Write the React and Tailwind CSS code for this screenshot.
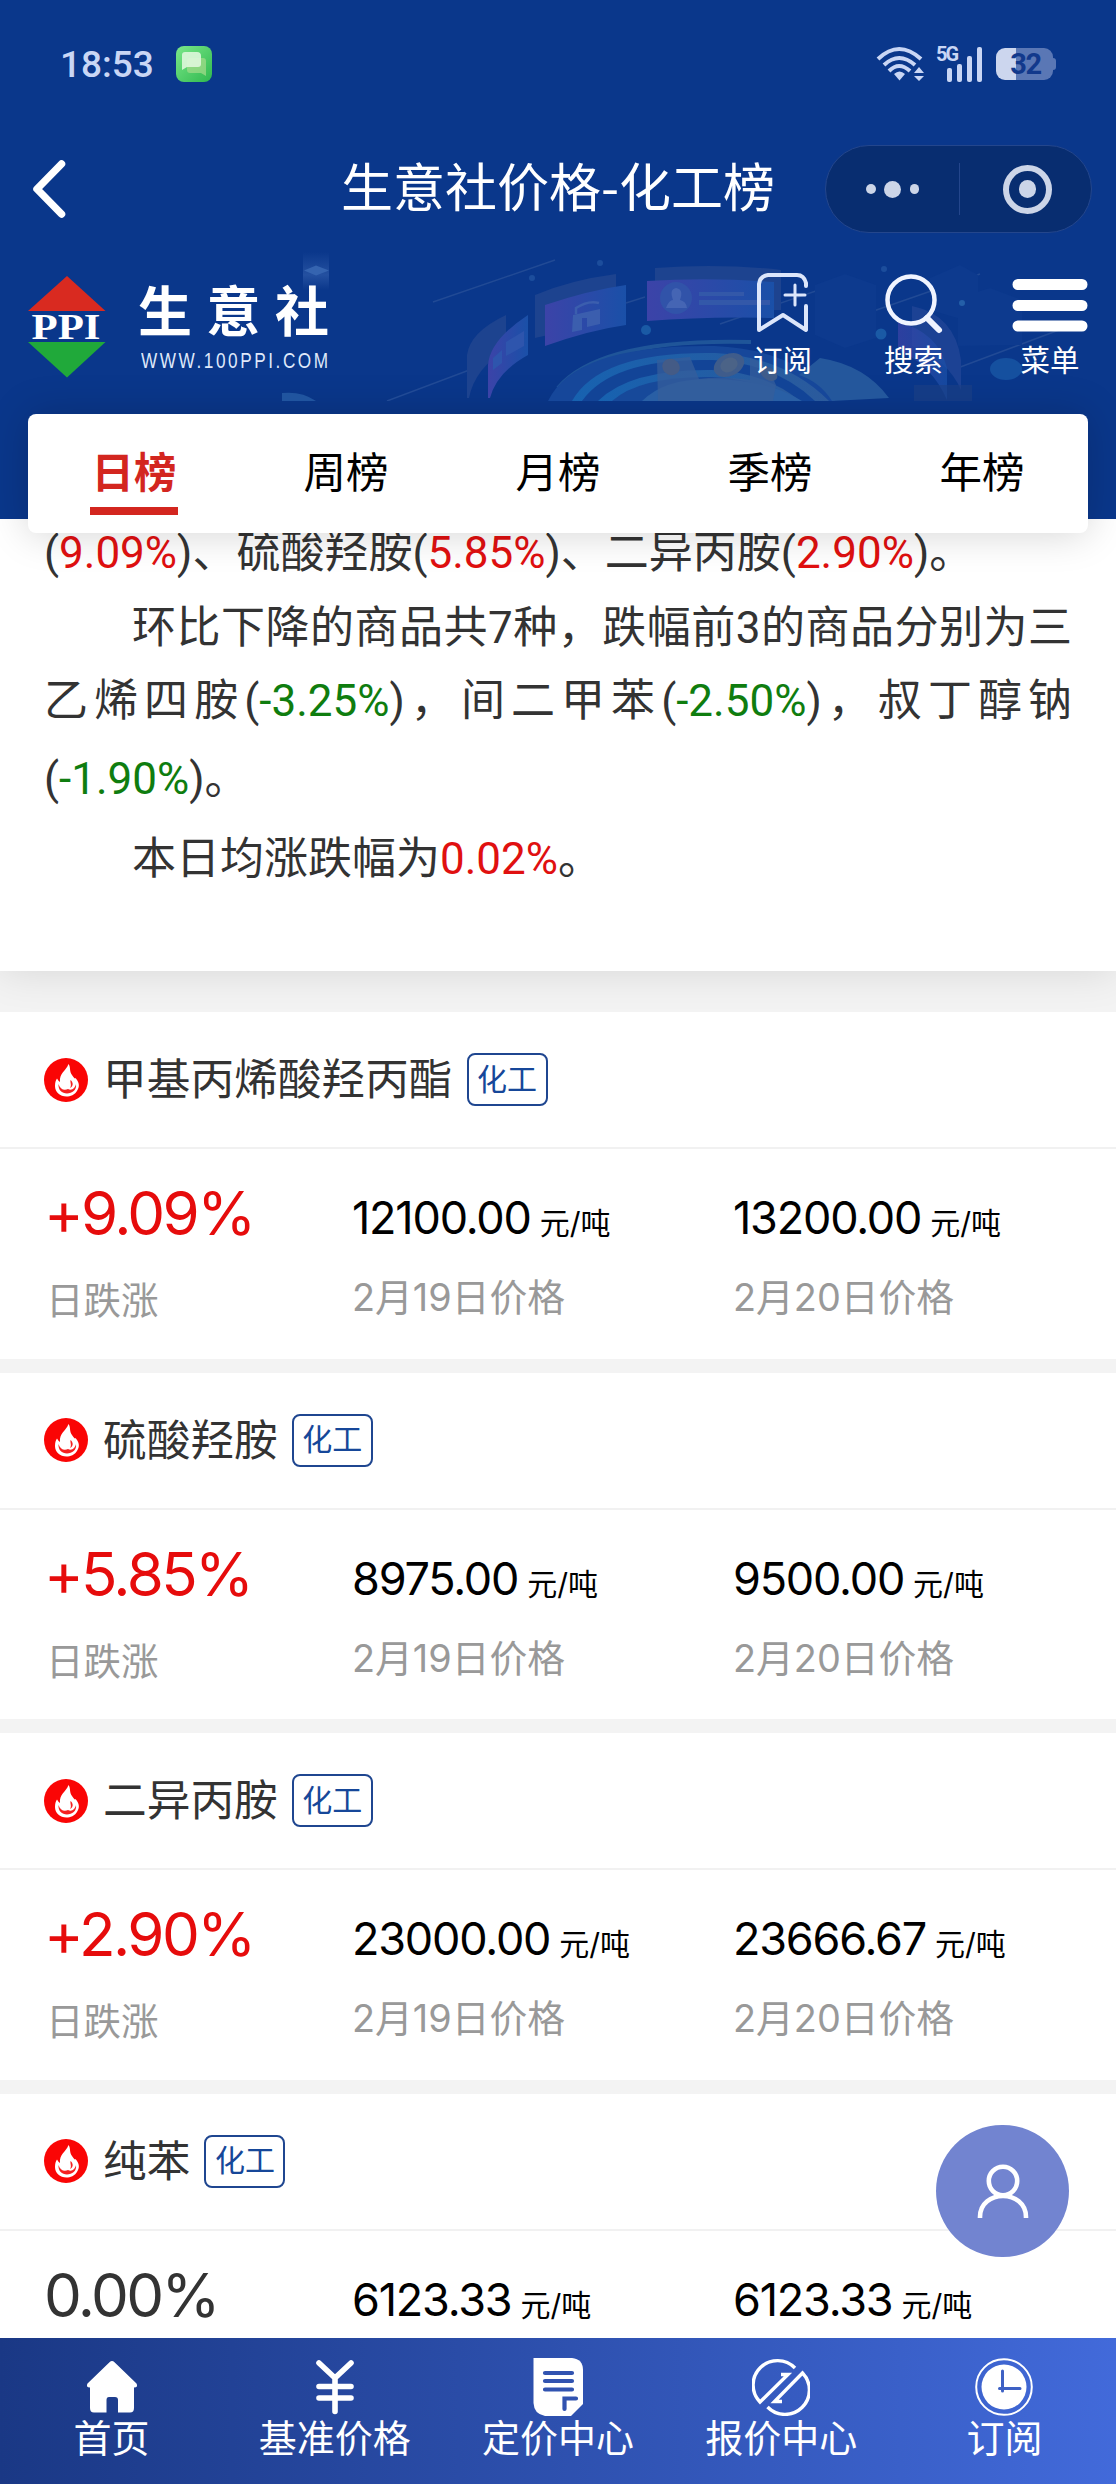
import { useState } from 'react';

const tabs = ['日榜', '周榜', '月榜', '季榜', '年榜'];

const goods = [
  { name: '甲基丙烯酸羟丙酯', rate: '+9.09%', prev: '12100.00', next: '13200.00', up: true, labels: true },
  { name: '硫酸羟胺', rate: '+5.85%', prev: '8975.00', next: '9500.00', up: true, labels: true },
  { name: '二异丙胺', rate: '+2.90%', prev: '23000.00', next: '23666.67', up: true, labels: true },
  { name: '纯苯', rate: '0.00%', prev: '6123.33', next: '6123.33', up: false, labels: false },
];

const HomeIcon = () => (
  <svg width="58" height="58" viewBox="0 0 58 58" fill="#fff">
    <path d="M26.5 4.2 Q29 2 31.5 4.2 L53.5 25.5 Q55.5 29.5 51 29.5 V50 Q51 54.5 47 54.5 H35 V42 Q35 39 32 39 H26 Q23.500 39 23.500 42 V54.500 H11 Q7 54.500 7 50 V29.500 Q2.500 29.500 4.500 25.500 Z" />
  </svg>
);

const YenIcon = () => (
  <svg width="58" height="58" viewBox="0 0 58 58" fill="none" stroke="#fff" strokeWidth="5.6" strokeLinecap="round">
    <path d="M13 5 L29 20 L45 5 M29 20 V53.500 M13 28.500 H45 M13 40 H45" />
  </svg>
);

const DocIcon = () => (
  <svg width="58" height="58" viewBox="0 0 58 58">
    <path d="M4.500 0 H43 Q54 1 54 12 V46 L42 58 H16 Q5 56 4.500 45 Z" fill="#fff" />
    <path d="M16 15 H43 M16 23 H43 M16 31.500 H43 M47 40.500 H35.500 V51" fill="none" stroke="#3153b0" strokeWidth="4.200" strokeLinecap="round" />
  </svg>
);

const QuoteIcon = () => (
  <svg width="58" height="58" viewBox="0 0 58 58" fill="none" stroke="#fff" strokeWidth="3.4">
    <path d="M43 10 A24 24 0 0 0 8 44 L36 16.500 H29" />
    <path d="M15.500 49 A24 24 0 0 0 50.500 15 L22.500 43.500 H30" />
  </svg>
);

const ClockIcon = () => (
  <svg width="58" height="58" viewBox="0 0 58 58">
    <circle cx="29" cy="29" r="27.800" fill="none" stroke="#fff" strokeWidth="2" />
    <circle cx="29" cy="29" r="22.500" fill="#fff" />
    <path d="M27.500 13 V33 M24.500 30.500 H45" fill="none" stroke="#3e61c4" strokeWidth="3" strokeLinecap="round" />
  </svg>
);

const bottomNav = [
  { label: '首页', icon: <HomeIcon /> },
  { label: '基准价格', icon: <YenIcon /> },
  { label: '定价中心', icon: <DocIcon /> },
  { label: '报价中心', icon: <QuoteIcon /> },
  { label: '订阅', icon: <ClockIcon /> },
];

const StatusBar = () => (
  <div className="flex h-[128px] items-center justify-between pl-[60px] pr-[60px] text-[#c9d6f5]">
    <div className="flex items-center">
      <span className="w-[116px] font-['Roboto'] text-[37px] font-medium leading-none">18:53</span>
      <svg width="36" height="36" viewBox="0 0 36 36">
        <defs>
          <linearGradient id="msg" x1="0" y1="0" x2="1" y2="1">
            <stop offset="0" stopColor="#7be88a" />
            <stop offset="1" stopColor="#2fb84e" />
          </linearGradient>
        </defs>
        <rect width="36" height="36" rx="8" fill="url(#msg)" />
        <path d="M14 12 H27 Q30 12 30 15 V30 L25 27 H14 Q11 27 11 24 V15 Q11 12 14 12Z" fill="#a6dc8c" opacity=".7" />
        <path d="M9 6 H21 Q25 6 25 10 V18 Q25 21 22 21 H11 L6 24 V9 Q6 6 9 6Z" fill="#dff7dc" opacity=".9" />
      </svg>
    </div>
    <div className="flex items-center">
      <svg width="48" height="36" viewBox="0 0 48 36" fill="none" stroke="#c9d6f5" strokeWidth="4">
        <path d="M2 13 Q23 -7 45 13" />
        <path d="M8 19 Q23 5 39 19" />
        <path d="M13 25 Q23 15 34 25" />
        <path d="M18 28 Q23.500 23 29 28 L23.500 34.500Z" fill="#c9d6f5" stroke="none" />
        <path d="M43 21 L48 27 H38Z M43 35 L38 30 H48Z" fill="#c9d6f5" stroke="none" />
      </svg>
      <div className="relative ml-3 h-[36px] w-[46px]">
        <span className="absolute left-0 top-[-1px] font-['Roboto'] text-[20px] font-bold leading-[18px] tracking-[-2px]">5G</span>
        <div className="flex h-full items-end justify-end gap-[4.500px]">
          <i className="h-[14px] w-[5.500px] rounded-[2px] bg-[#c9d6f5]" />
          <i className="h-[18px] w-[5.500px] rounded-[2px] bg-[#c9d6f5]" />
          <i className="h-[26px] w-[5.500px] rounded-[2px] bg-[#c9d6f5]" />
          <i className="h-[35px] w-[5.500px] rounded-[2px] bg-[#c9d6f5]" />
        </div>
      </div>
      <div className="ml-[14px] flex items-center">
        <div className="flex h-[32px] w-[57px] items-center justify-center rounded-[9px] bg-[linear-gradient(90deg,#ccd6ee_35%,#5a77b5_35%)] pl-[2px] font-['Roboto'] text-[29px] font-bold leading-none tracking-[-1.500px] text-[#12398c]">
          32
        </div>
        <div className="h-[12px] w-[3px] rounded-r bg-[#5a77b5]" />
      </div>
    </div>
  </div>
);

const TitleBar = () => (
  <div className="relative flex h-[122px] items-center justify-center">
    <svg className="absolute left-[30px] top-[30px]" width="40" height="62" viewBox="0 0 40 62" fill="none" stroke="#fff" strokeWidth="7.500" strokeLinecap="round" strokeLinejoin="round">
      <path d="M31.500 6 L7 31 L31.500 56" />
    </svg>
    <h1 className="mb-[8px] text-[52px] leading-[60px] text-white">生意社价格-化工榜</h1>
    <div className="absolute left-[825px] top-[17px] flex h-[88px] w-[267px] items-center rounded-full border border-[#24468c] bg-[#082d70]">
      <div className="flex w-[133px] items-center justify-center gap-[8.500px]">
        <i className="h-[9.500px] w-[9.500px] rounded-full bg-[#ccd5e8]" />
        <i className="h-[17px] w-[17px] rounded-full bg-[#ccd5e8]" />
        <i className="h-[9.500px] w-[9.500px] rounded-full bg-[#ccd5e8]" />
      </div>
      <div className="h-[52px] w-px bg-[#24468c]" />
      <div className="ml-[43px] flex h-[49px] w-[49px] items-center justify-center rounded-full border-[6px] border-[#ccd5e8]">
        <i className="h-[17.500px] w-[17.500px] rounded-full bg-[#ccd5e8]" />
      </div>
    </div>
  </div>
);

// faint isometric city behind the logo row
const BannerArt = () => (
  <svg className="absolute inset-0" width="1116" height="151" viewBox="0 0 1116 151" fill="none">
    <defs>
      <linearGradient id="panel" x1="0" y1="0" x2="1" y2="0">
        <stop offset="0" stopColor="#3c43a8" />
        <stop offset="1" stopColor="#1a50a8" />
      </linearGradient>
      <linearGradient id="ring" x1="0" y1="0" x2="1" y2="0">
        <stop offset="0" stopColor="#1762b0" />
        <stop offset="1" stopColor="#2b5a9c" />
      </linearGradient>
      <linearGradient id="beam" x1="0" y1="0" x2="0" y2="1">
        <stop offset="0" stopColor="#2a56a5" stopOpacity="0" />
        <stop offset=".6" stopColor="#2a56a5" stopOpacity=".8" />
        <stop offset="1" stopColor="#2a56a5" stopOpacity="0" />
      </linearGradient>
    </defs>
    <rect x="303" y="2" width="26" height="38" fill="url(#beam)" />
    <path d="M304 20.500 L316 15.500 L329 20.500 L316 25.500Z" fill="#3564b0" />
    <path d="M282 143 Q302 141 316 151 H282Z" fill="#20549f" />
    <path d="M433 52 L555 10 M387 151 L480 116 M626 53 L645 47 M720 74 L842 32 M862 65 L980 24 M955 119 L1075 74" stroke="#214a95" strokeWidth="1.500" />
    <path d="M467 148 V105 Q470 82 506 65 V100 Q475 118 469 148Z M535 45 Q570 30 616 24 V70 L535 88Z" fill="#1d438f" />
    <path d="M488 148 V115 Q490 90 528 65 V105 Q497 122 490 148Z" fill="url(#panel)" />
    <path d="M493 108 L502 100 V113 L493 120Z M506 92 L524 81 V96 L506 106Z" fill="#2e55ad" />
    <path d="M545 55 Q590 40 626 35 V75 Q590 80 545 96Z" fill="url(#panel)" />
    <path d="M573 65 L600 59 V74 L587 77 V68 H582 V80 L572 82Z" fill="#3b5eae" />
    <path d="M576 64 V58 Q588 50 599 53" stroke="#3b5eae" strokeWidth="2.500" />
    <path d="M655 18 Q720 13 781 20 V60 H655Z" fill="#1d438f" />
    <path d="M647 31 Q710 27 774 32 V68 Q710 66 647 71Z" fill="url(#panel)" />
    <circle cx="676" cy="48" r="16" fill="#3153a9" />
    <path d="M666 58 Q669 50 673 50 Q669 39 676 38 Q684 39 680 50 Q686 51 687 58Z" fill="#4565b4" />
    <path d="M699 42 H744 V46 H699Z M699 50 H770 V55 H699Z" fill="#3358a9" />
    <path d="M558 138 Q600 88 751 92" stroke="#1f5599" strokeWidth="4" />
    <path d="M548 151 Q575 94 715 96 Q800 100 835 151Z" fill="#16479a" />
    <path d="M572 151 Q600 101 715 103 Q785 107 829 151Z" fill="url(#ring)" />
    <path d="M582 151 Q612 108 712 110 Q775 113 815 151Z" fill="#124497" />
    <path d="M598 151 Q630 119 712 120 Q765 122 800 151Z" fill="url(#ring)" />
    <path d="M612 151 Q640 126 712 127 Q760 129 790 151Z" fill="#17499a" />
    <path d="M642 151 Q665 128 712 129 Q770 130 802 151Z" fill="#295fa5" />
    <path d="M657 110 L690 107 L699 129 Q720 126 750 130 V108 Q767 112 776 135 L773 151 H658Z" fill="#365d9b" opacity=".75" />
    <path d="M799 125 L820 108 Q865 115 889 148 L832 151 Q820 132 799 125Z" fill="#24579c" />
    <ellipse cx="671" cy="117" rx="9" ry="8" fill="#445b86" transform="rotate(25 671 117)" />
    <ellipse cx="729" cy="115" rx="16" ry="11" fill="#3f5c8b" transform="rotate(-25 729 115)" />
    <ellipse cx="729" cy="115" rx="9" ry="7" fill="#4b6387" transform="rotate(-25 729 115)" />
    <ellipse cx="769" cy="124" rx="9" ry="6" fill="#3f5c8b" transform="rotate(30 769 124)" />
    <path d="M815 35 L845 24 L876 35 V88 L845 98 L815 85Z M930 28 L960 15 L978 25 V74 L930 60Z M958 48 L990 38 L1022 50 V95 L958 96Z" fill="#0d3a8e" />
    <path d="M912 56 Q955 65 961 110 V140 Q948 110 912 96Z" fill="#1c4294" />
    <path d="M898 72 Q938 82 947 118 V150 Q932 115 898 100Z" fill="url(#panel)" opacity=".7" />
    <path d="M914 135 H972 V151 H914Z" fill="#1c3f84" opacity=".6" />
    <circle cx="646" cy="80" r="5" fill="#1a5aa5" />
    <circle cx="881" cy="84" r="5.500" fill="#1a5aa5" />
    <circle cx="962" cy="53" r="3" fill="#245fa8" />
    <circle cx="532" cy="28" r="3" fill="#1c4d9c" />
    <circle cx="600" cy="13" r="3" fill="#1c4d9c" />
    <circle cx="884" cy="19" r="3" fill="#1c4d9c" />
    <ellipse cx="1006" cy="119" rx="16" ry="11" fill="#15509f" />
  </svg>
);

const Banner = () => (
  <div className="relative h-[151px] overflow-hidden text-white">
    <BannerArt />
    <div className="relative flex pl-[28px]">
      <svg className="mt-[26px]" width="78" height="102" viewBox="0 0 78 102">
        <path d="M39 0 L77.500 35 H0Z" fill="#d92a20" />
        <path d="M0 66 H77.500 L39 101.500Z" fill="#20a93a" />
        <text x="3.500" y="62.500" textLength="69" lengthAdjust="spacingAndGlyphs" fontFamily="Liberation Serif" fontWeight="bold" fontSize="35" fill="#fff">PPI</text>
      </svg>
      <div className="ml-[32px] mt-[29px]">
        <div className="text-[54px] font-bold leading-[60px] tracking-[14.500px]">生意社</div>
        <div className="ml-[3px] mt-[12px] w-[240px] origin-left scale-x-80 font-['Liberation_Sans'] text-[21.500px] leading-[20px] tracking-[3.200px] text-[#dfe8fa]">WWW.100PPI.COM</div>
      </div>
      <div className="absolute left-[746px] top-[20px] flex w-[342px] justify-between text-[29.500px] leading-[34px]">
        <div className="flex w-[73px] flex-col items-center">
          <svg width="60" height="68" viewBox="0 0 60 68" fill="none" stroke="#dce6fb" strokeWidth="4" strokeLinecap="round">
            <path d="M53 16 V13 Q51 5 44 5 H15 Q7 6 6 14 V60 L30 45 L53 60 V36" strokeLinejoin="round" />
            <path d="M42 15 V35 M32 25 H52" strokeWidth="3" />
          </svg>
          <span className="mt-[3px] whitespace-nowrap">订阅</span>
        </div>
        <div className="mr-[4px] flex w-[73px] flex-col items-center">
          <svg width="60" height="68" viewBox="0 0 60 68" fill="none" stroke="#f0f4ff" strokeLinecap="round">
            <circle cx="27" cy="30" r="23.500" strokeWidth="4.500" />
            <path d="M43 48 L55 60" strokeWidth="6" />
          </svg>
          <span className="mt-[3px] whitespace-nowrap">搜索</span>
        </div>
        <div className="flex w-[76px] flex-col items-center">
          <svg width="76" height="68" viewBox="0 0 76 68" fill="none" stroke="#fff" strokeWidth="11" strokeLinecap="round">
            <path d="M6 14.500 H70 M6 35.500 H70 M6 56 H70" />
          </svg>
          <span className="mt-[3px] whitespace-nowrap">菜单</span>
        </div>
      </div>
    </div>
  </div>
);

const FireIcon = () => (
  <svg width="44" height="44" viewBox="0 0 44 44">
    <circle cx="22" cy="22" r="22" fill="#fa0505" />
    <path d="M24.500 6 C27 9 25 13 28 17 C30 20 31 21 31.500 20 C35 24 36 28 33.500 32 C31 37 26 38.500 22.500 38.500 C16 38.500 11 34 11 28 C11 24 12 22 13 20.500 C14 22 14.500 23 16 24 C15 15 22 13 24.500 6Z" fill="#fff" />
    <path d="M14.500 26 C16 31 20 33 24 31 C28 33 31 30 32 26 C33 32 28 35.500 23 35.500 C18 35.500 14 32 14.500 26Z M26.500 22 C26 25 28 27 26 30 C30 28 29 24 26.500 22Z" fill="#f52020" />
  </svg>
);

const GoodsCard = ({ item }) => (
  <section className="h-[346.670px] shrink-0 bg-white">
    <div className="flex h-[137px] items-center border-b-2 border-[#f1f1f1] pl-[44px]">
      <FireIcon />
      <h2 className="mb-[7px] ml-[15px] text-[43.700px] leading-[60px] text-[#333]">{item.name}</h2>
      <span className="ml-[14px] flex h-[53px] w-[81px] items-center justify-center rounded-[8px] border-2 border-[#1f4690] pb-[6px] text-[30px] leading-none text-[#164799]">化工</span>
    </div>
    <div className="flex pl-[44px] font-['Inter','Noto_Sans_CJK_SC',sans-serif]">
      <div className="w-[308px] pt-8">
        <div className={`text-[60px] leading-[64px] tracking-[-2.600px] ${item.up ? 'text-[#e60c0c]' : 'text-[#333]'}`}>{item.rate}</div>
        {item.labels && <div className="ml-[2px] mt-[28px] text-[37.500px] leading-[56px] text-[#999]">日跌涨</div>}
      </div>
      {[['2月19日价格', item.prev], ['2月20日价格', item.next]].map(([label, price]) => (
        <div key={label} className="w-[381px] pt-[41px]">
          <div className="text-[45px] leading-[56px] tracking-[-1.200px] text-black">
            {price}<span className="ml-[9px] text-[30px] tracking-normal">元/吨</span>
          </div>
          {item.labels && <div className="mt-[18px] text-[37.800px] leading-[56px] text-[#999]">{label}</div>}
        </div>
      ))}
    </div>
  </section>
);

const Red = ({ children }) => <span className="text-[#e01010]">{children}</span>;
const Green = ({ children }) => <span className="text-[#0f7d0f]">{children}</span>;

const App = () => {
  const [active, setActive] = useState(0);

  return (
    <div lang="zh-CN" className="flex h-[2484px] w-[1116px] flex-col overflow-hidden bg-[#f3f3f3] font-['Noto_Sans_CJK_SC',sans-serif]">
      <header className="relative z-10 h-[519px] shrink-0 bg-[#0a378b]">
        <StatusBar />
        <TitleBar />
        <Banner />
        <nav className="mx-[28px] mt-[13px] flex h-[119px] rounded-[8px] bg-white shadow-[0_0_40px_rgba(0,0,0,0.18)]">
          {tabs.map((tab, i) => (
            <button key={tab} onClick={() => setActive(i)} className="flex flex-1 flex-col items-center pt-[26px]">
              <span className={`text-[42.500px] leading-[60px] ${i === active ? 'font-bold text-[#d3261f]' : 'text-black'}`}>{tab}</span>
              {i === active && <i className="mt-[7px] h-[8px] w-[88px] bg-[#d3261f]" />}
            </button>
          ))}
        </nav>
      </header>

      {/* Summary */}
      <article className="relative h-[452px] shrink-0 bg-white px-[44px] font-['Roboto','Noto_Sans_CJK_SC',sans-serif] text-[44px] text-[#333] shadow-[0_0_40px_rgba(0,0,0,0.12)]">
        <p className="-mt-[3px] leading-[75px]">
          (<Red>9.09%</Red>)、硫酸羟胺(<Red>5.85%</Red>)、二异丙胺(<Red>2.90%</Red>)。
        </p>
        <p className="whitespace-nowrap pl-[88px] leading-[75px] [text-align-last:justify]">环比下降的商品共7种，跌幅前3的商品分别为三</p>
        <p className="whitespace-nowrap leading-[71px] [text-align-last:justify]">
          乙烯四胺(<Green>-3.25%</Green>)，间二甲苯(<Green>-2.50%</Green>)，叔丁醇钠
        </p>
        <p className="leading-[85px]">(<Green>-1.90%</Green>)。</p>
        <p className="pl-[88px] leading-[74px]">本日均涨跌幅为<Red>0.02%</Red>。</p>
      </article>

      {/* Ranking */}
      <main className="mt-[41px] flex min-h-0 flex-1 flex-col gap-[14px] overflow-hidden">
        {goods.map(item => (
          <GoodsCard key={item.name} item={item} />
        ))}
      </main>

      <button className="fixed left-[936px] top-[2125px] flex h-[132px] w-[133px] items-center justify-center rounded-full bg-[#7284d0]">
        <svg width="54" height="56" viewBox="0 0 54 56" fill="none" stroke="#fff" strokeWidth="4.600">
          <circle cx="27" cy="18" r="14.200" />
          <path d="M4 55 V54 C4 26 50 26 50 54 V55" />
        </svg>
      </button>

      <footer className="flex h-[146px] shrink-0 bg-linear-to-r from-[#1a3885] to-[#426ada] text-white">
        {bottomNav.map(item => (
          <div key={item.label} className="flex flex-1 flex-col items-center pt-[20px]">
            {item.icon}
            <span className="-mt-[2px] text-[38px] leading-[44px]">{item.label}</span>
          </div>
        ))}
      </footer>
    </div>
  );
};

export default App;
